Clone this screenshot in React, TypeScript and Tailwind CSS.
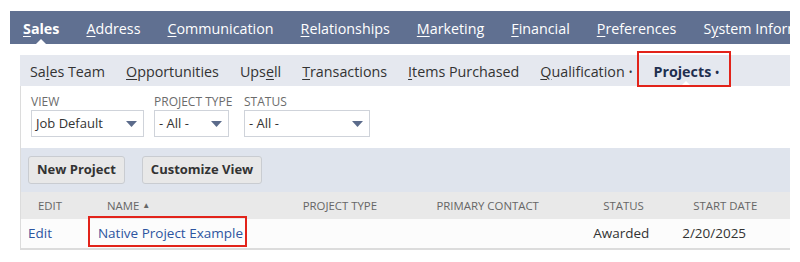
import React from 'react';

const topTabs: { pre: string; u: string; post: string; bold?: boolean }[] = [
  { pre: '', u: 'S', post: 'ales', bold: true },
  { pre: '', u: 'A', post: 'ddress' },
  { pre: '', u: 'C', post: 'ommunication' },
  { pre: '', u: 'R', post: 'elationships' },
  { pre: '', u: 'M', post: 'arketing' },
  { pre: '', u: 'F', post: 'inancial' },
  { pre: '', u: 'P', post: 'references' },
  { pre: 'S', u: 'y', post: 'stem Information' },
];

const subTabs: { pre: string; u: string; post: string; dot?: boolean }[] = [
  { pre: 'Sa', u: 'l', post: 'es Team' },
  { pre: '', u: 'O', post: 'pportunities' },
  { pre: 'Ups', u: 'e', post: 'll' },
  { pre: '', u: 'T', post: 'ransactions' },
  { pre: '', u: 'I', post: 'tems Purchased' },
  { pre: '', u: 'Q', post: 'ualification', dot: true },
];

const columns = [
  { label: 'Edit', w: 'w-[69px]' },
  { label: 'Name', w: 'w-[196px]', sort: true },
  { label: 'Project Type', w: 'w-[134px]' },
  { label: 'Primary Contact', w: 'w-[167px]' },
  { label: 'Status', w: 'w-[90px]' },
  { label: 'Start Date', w: 'w-[114px]' },
];

function Caret() {
  return (
    <svg width="11" height="6" viewBox="0 0 11 6" className="shrink-0">
      <path d="M0 0 H11 L5.5 6 Z" fill="#5b6b8b" />
    </svg>
  );
}

function Filter({ label, value, w, box }: { label: string; value: string; w: string; box: string }) {
  return (
    <div className={w}>
      <div className="text-[12px] leading-[14px] text-[#6b6b6b] mb-[1px] whitespace-nowrap">{label}</div>
      <div className={`${box} h-[27px] border border-[#cfd3da] bg-white flex items-center justify-between pl-[4px] pr-[6px] text-[13px] text-[#333]`}>
        <span>{value}</span>
        <Caret />
      </div>
    </div>
  );
}

export default function App() {
  return (
    <div className="relative w-[800px] h-[262px] overflow-hidden bg-white font-['Open_Sans',sans-serif]">
      {/* Main tabs */}
      <div className="pt-[11px] pl-[10px] pr-[10px]">
        <div className="relative h-[33px] bg-[#607091] flex items-center pt-[3px] pl-[13px] gap-[27px] text-white text-[14.3px] whitespace-nowrap overflow-hidden">
          {topTabs.map((t) => (
            <span key={t.post} className={t.bold ? 'font-bold' : ''}>
              {t.pre}
              <span className="underline underline-offset-2">{t.u}</span>
              {t.post}
            </span>
          ))}
          <span className="absolute left-[26px] bottom-0 w-0 h-0 border-l-[5px] border-r-[5px] border-b-[5px] border-l-transparent border-r-transparent border-b-white" />
        </div>
      </div>

      <div className="mt-[11px] ml-[20px] mr-[10px]">
        {/* Sub tabs */}
        <div className="relative h-[31px] bg-[#e5e8ef] flex items-center pt-[2px] pl-[10px] gap-[21px] text-[14.3px] text-[#333] whitespace-nowrap">
          {subTabs.map((t) => (
            <span key={t.post}>
              {t.pre}
              <span className="underline underline-offset-2">{t.u}</span>
              {t.post}
              {t.dot && <span className="ml-[4px] text-[10px] align-middle">•</span>}
            </span>
          ))}
          <span className="font-bold text-[#1f2f4f]">
            Projects<span className="ml-[4px] text-[10px] align-middle">•</span>
          </span>
          <span className="absolute left-[661px] bottom-0 w-0 h-0 border-l-[5px] border-r-[5px] border-b-[5px] border-l-transparent border-r-transparent border-b-white" />
        </div>

        {/* Panel */}
        <div className="border-l border-b-2 border-[#dcdcdc]">
          {/* Filters */}
          <div className="h-[62px] pt-[9px] pl-[10px] flex gap-[10px]">
            <Filter label="VIEW" value="Job Default" w="w-[113px]" box="w-[113px]" />
            <Filter label="PROJECT TYPE" value="- All -" w="w-[80px]" box="w-[75px]" />
            <Filter label="STATUS" value="- All -" w="w-[126px]" box="w-[126px]" />
          </div>

          {/* Buttons */}
          <div className="h-[44px] bg-[#dfe4ed] flex items-center pl-[7px] gap-[17px]">
            {['New Project', 'Customize View'].map((b) => (
              <button
                key={b}
                className="h-[28px] px-[8px] rounded-[3px] border border-[#c9ccd1] bg-[#e8e8e8] text-[13px] font-bold text-[#333]"
              >
                {b}
              </button>
            ))}
          </div>

          {/* Table header */}
          <div className="h-[27px] bg-[#e9e9e9] flex items-center text-[11.4px] text-[#666] uppercase whitespace-nowrap">
            {columns.map((c) => (
              <div key={c.label} className={`${c.w} pl-[17px] flex items-center`}>
                {c.label}
                {c.sort && <span className="ml-[3px] text-[8px]">▲</span>}
              </div>
            ))}
          </div>

          {/* Row */}
          <div className="h-[29px] bg-[#fcfcfc] flex items-center text-[13.5px] text-[#333] whitespace-nowrap">
            <div className="w-[69px] pl-[7px] text-[#2d55a0]">Edit</div>
            <div className="w-[196px] pl-[8px] text-[#2d55a0]">Native Project Example</div>
            <div className="w-[134px]" />
            <div className="w-[167px]" />
            <div className="w-[90px] pl-[7px]">Awarded</div>
            <div className="w-[114px] pl-[6px]">2/20/2025</div>
          </div>
        </div>
      </div>

      {/* Annotation boxes */}
      <div className="absolute left-[637px] top-[51px] w-[94px] h-[36px] border-[2.5px] border-[#e2231a]" />
      <div className="absolute left-[88px] top-[216px] w-[159px] h-[31px] border-[2.5px] border-[#e2231a]" />
    </div>
  );
}
